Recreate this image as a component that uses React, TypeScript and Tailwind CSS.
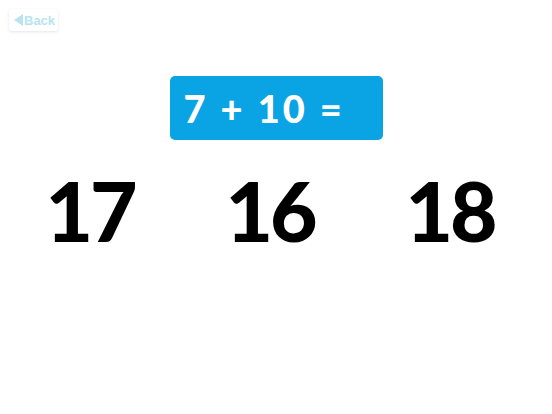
export default function App() {
  const answers = ["17", "16", "18"]

  return (
    <div className="relative w-[552px] h-[414px] bg-white overflow-hidden" style={{ fontFamily: "Lato, 'DejaVu Sans', sans-serif" }}>
      {/* Back button */}
      <div className="absolute left-[9px] top-[9px] flex items-center h-[22px] pl-[5px] pr-[3px] rounded-[3px] bg-white shadow-[0_1px_3px_rgba(0,0,0,0.12)] opacity-80">
        <svg width="9" height="12" viewBox="0 0 9 12" className="mr-[1px]">
          <path d="M9 0 L0 6 L9 12 Z" fill="#a9dcf0" />
        </svg>
        <span className="text-[13px] font-bold leading-none text-[#a9dcf0]" style={{ fontFamily: "'Liberation Sans', Arial, sans-serif" }}>Back</span>
      </div>

      <div className="flex flex-col items-center pt-[76px]">
        <div className="w-[213px] h-[64px] rounded-[5px] bg-[#0aa3e3] flex items-center pl-[14px]">
          <span className="text-white text-[38px] font-black leading-none tracking-[3px]">7 + 10 =</span>
        </div>

        <div className="flex justify-center w-full pr-[12px] mt-[29px]">
          {answers.map((n) => (
            <span key={n} className="w-[180px] text-center text-black text-[82px] font-black leading-none tracking-[-3px]">{n}</span>
          ))}
        </div>
      </div>
    </div>
  )
}
